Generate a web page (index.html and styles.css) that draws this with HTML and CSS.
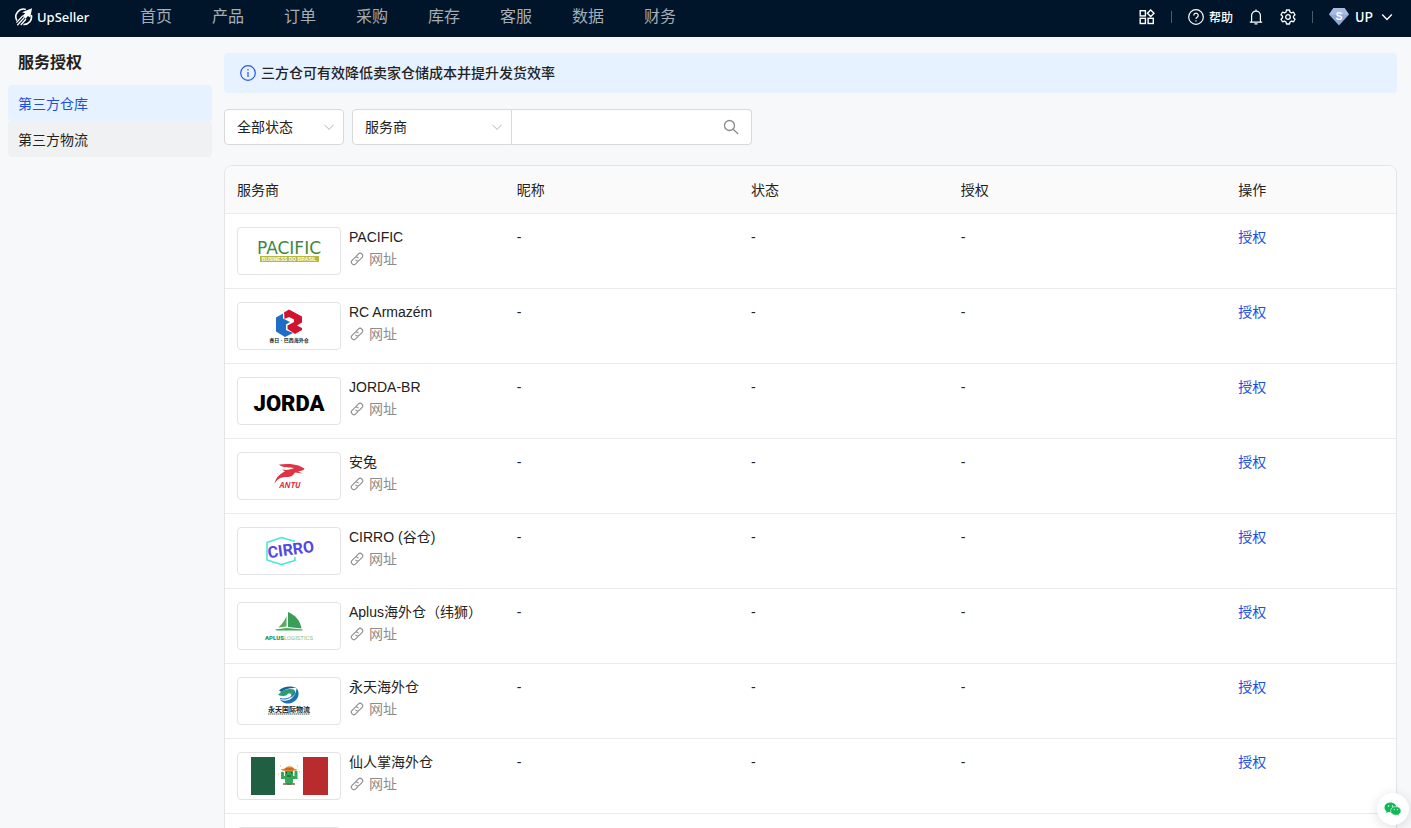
FILE: index.html
```html
<!DOCTYPE html>
<html lang="zh-CN">
<head>
<meta charset="utf-8">
<title>UpSeller - 服务授权</title>
<link rel="stylesheet" href="styles.css">
</head>
<body>
<svg class="sprite" aria-hidden="true">
  <symbol id="link" viewBox="0 0 14 14">
    <g fill="none" stroke="currentColor" stroke-width="1.100" stroke-linecap="round">
      <path d="M6 4.400 8.300 2.100a2.500 2.500 0 0 1 3.600 3.600L9.400 8.200a2.500 2.500 0 0 1-3.600 0"/>
      <path d="M8 9.600 5.700 11.900a2.500 2.500 0 0 1-3.600-3.600L4.600 5.800a2.500 2.500 0 0 1 3.600 0"/>
    </g>
  </symbol>
  <symbol id="chevron" viewBox="0 0 12 12">
    <path d="M1.500 3.800 6 8.400l4.500-4.600" fill="none" stroke="currentColor" stroke-width="1"/>
  </symbol>
</svg>
<div class="app">
  <header class="topbar">
    <a class="brand" href="#">
      <svg class="brand-mark" viewBox="0 0 18 18" fill="none" stroke="#fff" stroke-width="1.600">
        <path d="M1.900 12.500A7.600 7.600 0 0 1 10.800 1.500M16.300 7A7.600 7.600 0 0 1 8.400 16.500"/>
        <path d="M17 .2 15.300 9.600 12.900 8 10.600 10.800 7.700 7.700 10.200 5.300 7 4.300z" fill="#fff" stroke="none"/>
        <path d="M1.400 14.600 7.900 7.600M2.300 17.300 9.400 9.400M5.800 17 11 11" stroke-width="1.300"/>
      </svg>
      <span>UpSeller</span>
    </a>
    <nav class="nav">
      <a href="#">首页</a><a href="#">产品</a><a href="#">订单</a><a href="#">采购</a><a href="#">库存</a><a href="#">客服</a><a href="#">数据</a><a href="#">财务</a>
    </nav>
    <div class="tools">
      <button class="tool" type="button" aria-label="应用">
        <svg viewBox="0 0 16 16" width="16" height="16" fill="none" stroke="#fff" stroke-width="1.400"><rect x="1.200" y="1.700" width="5.200" height="5.200"/><rect x="1.200" y="9.300" width="5.200" height="5.200"/><rect x="9.100" y="9.300" width="5.200" height="5.200"/><path d="m11.700.9 3.300 3.300-3.300 3.300-3.300-3.300z"/></svg>
      </button>
      <span class="divider"></span>
      <button class="tool help" type="button">
        <svg viewBox="0 0 16 16" width="16" height="16" fill="none" stroke="#fff" stroke-width="1.200"><circle cx="8" cy="8" r="7.300"/><path d="M5.800 6.400a2.200 2.200 0 1 1 3.400 1.800C8.300 8.800 8 9 8 9.900"/><path d="M8 11.200v1.200"/></svg>
        帮助
      </button>
      <button class="tool bell" type="button" aria-label="通知">
        <svg viewBox="0 0 14 16" width="14" height="16" fill="none" stroke="#fff" stroke-width="1.200"><path d="M2.600 13V6.500a4.400 4.400 0 0 1 8.800 0V13M.8 13.200h12.400M5.500 14.900h3M7 .5v1.600"/></svg>
      </button>
      <button class="tool gear" type="button" aria-label="设置">
        <svg viewBox="0 0 16 16" width="16" height="16" fill="none" stroke="#fff" stroke-width="1.300" stroke-linejoin="round"><path d="M6.500 1h3l.5 2 1.500.9 2-.7 1.500 2.600-1.500 1.400v1.600l1.500 1.400-1.500 2.600-2-.7-1.500.9-.5 2h-3L6 13l-1.500-.9-2 .7L1 10.200l1.500-1.400V7.200L1 5.800l1.500-2.600 2 .7L6 3z"/><circle cx="8" cy="8" r="2.300"/></svg>
      </button>
      <span class="divider"></span>
      <button class="tool user" type="button">
        <svg viewBox="0 0 20 18" width="20" height="18"><path d="M4.500 0h11L20 6.500 10 17.500 0 6.500z" fill="#93a9d6"/><path d="M4.500 0h11L20 6.500H0z" fill="#a9bbe0"/><text class="gem" x="10" y="12" text-anchor="middle">S</text></svg>
        <span>UP</span>
        <svg class="caret" viewBox="0 0 12 12" width="12" height="12"><path d="m1.200 3.600 4.800 4.800 4.800-4.800" fill="none" stroke="#fff" stroke-width="1.400"/></svg>
      </button>
    </div>
  </header>

  <div class="body">
    <aside class="sidebar">
      <h1>服务授权</h1>
      <a class="side-link active" href="#">第三方仓库</a>
      <a class="side-link" href="#">第三方物流</a>
    </aside>

    <main class="main">
      <div class="notice">
        <svg viewBox="0 0 16 16" width="16" height="16" fill="none" stroke="#2a55e5"><circle cx="8" cy="8" r="7.300" stroke-width="1.200"/><path d="M8 7v5M8 4v1.500" stroke-width="1.200"/></svg>
        <span>三方仓可有效降低卖家仓储成本并提升发货效率</span>
      </div>

      <form class="filters">
        <div class="select status">
          <select aria-label="状态"><option>全部状态</option></select>
          <svg><use href="#chevron"/></svg>
        </div>
        <div class="search">
          <div class="select field">
            <select aria-label="搜索字段"><option>服务商</option></select>
            <svg><use href="#chevron"/></svg>
          </div>
          <div class="keyword">
            <input type="text" aria-label="搜索内容">
            <button type="button" aria-label="搜索"><svg viewBox="0 0 16 16" width="16" height="16" fill="none" stroke="#8a8a8a" stroke-width="1.300"><circle cx="6.500" cy="6.500" r="5"/><path d="m10.200 10.200 5 4.800"/></svg></button>
          </div>
        </div>
      </form>

      <div class="panel">
        <table>
          <colgroup><col class="c-provider"><col class="c-nick"><col class="c-state"><col class="c-auth"><col class="c-action"></colgroup>
          <thead><tr><th>服务商</th><th>昵称</th><th>状态</th><th>授权</th><th>操作</th></tr></thead>
          <tbody>
            <tr><td><div class="provider"><svg class="logo" viewBox="1 1 102 46">
              <text class="pacific" x="52" y="27" text-anchor="middle">PACIFIC</text>
              <rect x="23" y="29" width="59" height="6" fill="#b4b83f"/>
              <text class="pacific-sub" x="52" y="34" text-anchor="middle">BUSINESS DO BRASIL</text>
            </svg><div><div>PACIFIC</div><a class="site" href="#"><svg><use href="#link"/></svg>网址</a></div></div></td><td>-</td><td>-</td><td>-</td><td><a href="#">授权</a></td></tr>

            <tr><td><div class="provider"><svg class="logo" viewBox="1 1 102 46">
              <path d="M39 15.500 46 11.500V16.500L53 20 49 22.500V28L56 31 48 35 39 29.500z" fill="#1c6fc4"/>
              <path d="M47 10.500 52 7.500 65 14.500V20.500L60 23.500 65 26V28L58 32 50.500 27V23.500L57 20V17.500L52 15 47.500 17z" fill="#d2132f"/>
              <text class="rc" x="52" y="40" text-anchor="middle">睿日 · 巴西海外仓</text>
            </svg><div><div>RC Armazém</div><a class="site" href="#"><svg><use href="#link"/></svg>网址</a></div></div></td><td>-</td><td>-</td><td>-</td><td><a href="#">授权</a></td></tr>

            <tr><td><div class="provider"><svg class="logo" viewBox="1 1 102 46">
              <text class="jorda" x="52" y="34" text-anchor="middle">JORDA</text>
            </svg><div><div>JORDA-BR</div><a class="site" href="#"><svg><use href="#link"/></svg>网址</a></div></div></td><td>-</td><td>-</td><td>-</td><td><a href="#">授权</a></td></tr>

            <tr><td><div class="provider"><svg class="logo" viewBox="1 1 102 46">
              <path d="M37.500 31.500C39 25 43.500 21.500 48 19.500L45 17.500C50 18.500 54 17.500 57 16 52 15.500 46 16 42 12.500 50 11.500 57 12 61.500 13.500L67.500 16.500C67 18.500 64 19 61 19.500L66 21.500 58 20.500C56 24 53 25.500 49 25 44 25 40.500 27 37.500 31.500z" fill="#dc3545"/>
              <text class="antu" x="53" y="36" text-anchor="middle">ANTU</text>
            </svg><div><div>安兔</div><a class="site" href="#"><svg><use href="#link"/></svg>网址</a></div></div></td><td>-</td><td>-</td><td>-</td><td><a href="#">授权</a></td></tr>

            <tr><td><div class="provider"><svg class="logo" viewBox="1 1 102 46">
              <path d="M58 14.500 44.500 10.500 30 15.500V33L44.500 37.500 58 33.500V30" fill="none" stroke="#48ead2" stroke-width="1.600" stroke-linejoin="round"/>
              <text class="cirro" x="54" y="28" text-anchor="middle" transform="rotate(-8 54 24)">CIRRO</text>
            </svg><div><div>CIRRO (谷仓)</div><a class="site" href="#"><svg><use href="#link"/></svg>网址</a></div></div></td><td>-</td><td>-</td><td>-</td><td><a href="#">授权</a></td></tr>

            <tr><td><div class="provider"><svg class="logo" viewBox="1 1 102 46">
              <path d="M51 10C58 13 63 18 64.500 26.500L51 25z" fill="#399f58"/>
              <path d="M49.500 14V24.500L41.500 25.500C45 22 48 18 49.500 14z" fill="#55ad58"/>
              <path d="M38 27.500 50 26 65.500 27.500V28.500H39.500z" fill="#46a85a"/>
              <text class="aplus" x="28" y="38">APLUS<tspan class="aplus-sub">LOGISTICS</tspan></text>
            </svg><div><div>Aplus海外仓（纬狮）</div><a class="site" href="#"><svg><use href="#link"/></svg>网址</a></div></div></td><td>-</td><td>-</td><td>-</td><td><a href="#">授权</a></td></tr>

            <tr><td><div class="provider"><svg class="logo" viewBox="1 1 102 46">
              <path d="M42 13.500C46 9.500 54 8 59.500 11 54 10.500 48 11.500 44.500 15z" fill="#185f9e"/>
              <path d="M41 18C45 13 50 11 56.500 12.500 60 14 58 19 54 20.500 55 18 54.500 16 51 16.500 49 20 45 19 41 18z" fill="#2a9d72"/>
              <path d="M59.500 11C65 18 59 27 49.500 26.500 46.500 26 44.500 24.500 43 22.500 49 26 59 22 59.500 11z" fill="#1971b8"/>
              <path d="M43 21.500C50 23.500 56 19.500 57.500 15" stroke="#1971b8" fill="none"/>
              <text class="yongtian" x="52" y="35" text-anchor="middle">永天国际物流</text>
              <path d="M31 37h42" stroke="#555" stroke-width="1.200" stroke-dasharray="1.500 .5"/>
            </svg><div><div>永天海外仓</div><a class="site" href="#"><svg><use href="#link"/></svg>网址</a></div></div></td><td>-</td><td>-</td><td>-</td><td><a href="#">授权</a></td></tr>

            <tr><td><div class="provider"><svg class="logo" viewBox="1 1 102 46">
              <path d="M14 5h24v38H14z" fill="#215f43"/><path d="M66 5h25v38H66z" fill="#b82c2e"/>
              <g fill="none" stroke="#35a857" stroke-linecap="round"><path d="M52 20v9" stroke-width="8"/><path d="M45.500 21v4.500h13.500V20" stroke-width="3"/></g>
              <path d="M43.500 17.500c2 2 15 2 17 0l-4-1c0-3-8-3-8 0z" fill="#e88b25"/>
              <path d="M47.500 17h9" stroke="#bb3b28"/><path d="M49.500 20v1.500M54.500 20v1.500M50 24h4" stroke="#174d2e"/>
              <path d="M46 32h12" stroke="#796454" stroke-width="1.500"/>
              <path d="M41 22h1M62 20h1M60 14h1M43 14h1" stroke="#d7b85c"/>
            </svg><div><div>仙人掌海外仓</div><a class="site" href="#"><svg><use href="#link"/></svg>网址</a></div></div></td><td>-</td><td>-</td><td>-</td><td><a href="#">授权</a></td></tr>

            <tr><td><div class="provider"><svg class="logo" viewBox="1 1 102 46"></svg></div></td><td></td><td></td><td></td><td></td></tr>
          </tbody>
        </table>
      </div>
    </main>
  </div>

  <button class="chat" type="button" aria-label="微信客服">
    <svg viewBox="0 0 18 14" width="18" height="14"><path d="M6.500.5C2.800.5.500 2.700.500 5.500c0 1.600.8 2.900 2 3.700L2 11l2.200-1.100c5 1.500 8.300-1.400 8.300-4.400 0-2.800-2.700-5-6-5z" fill="#12b757"/><path d="M11.800 4.600c-3 0-5.200 1.900-5.200 4.300s2.400 4.300 5.200 4.300l1.600-.3 1.800.9-.4-1.500c1.400-.8 2.200-2 2.200-3.400 0-2.400-2.200-4.300-5.200-4.300z" fill="#12b757" stroke="#fff" stroke-width=".6"/><g fill="#fff"><circle cx="4.600" cy="4" r=".7"/><circle cx="8.400" cy="4" r=".7"/><circle cx="10.200" cy="7.600" r=".6"/><circle cx="13.400" cy="7.600" r=".6"/></g></svg>
  </button>
</div>
</body>
</html>
```

FILE: styles.css
```css
* { box-sizing: border-box; }
body {
  margin: 0;
  font: 14px/22px "Liberation Sans", "Noto Sans CJK SC", sans-serif;
  color: #222;
  background: #f7f8fa;
}
a { color: #1d4fe0; text-decoration: none; }
button, input, select { font: inherit; color: inherit; }
button { border: 0; padding: 0; background: none; cursor: pointer; }
svg { flex: none; }
.sprite { position: absolute; width: 0; height: 0; }
.app { height: 100vh; display: flex; flex-direction: column; overflow: hidden; }

.topbar {
  flex: none;
  display: flex;
  align-items: center;
  height: 37px;
  padding: 0 18px 4px 15px;
  background: #001529;
  color: #fff;
}
.brand {
  display: flex;
  align-items: center;
  gap: 4px;
  width: 125px;
  color: #fff;
  font: 500 13px/20px "Noto Sans", sans-serif;
}
.brand-mark { width: 18px; height: 18px; }
.nav { display: flex; gap: 40px; font-size: 16px; }
.nav a { color: #a6adb4; }
.tools { display: flex; align-items: center; margin-left: auto; }
.tool { display: flex; align-items: center; font: 500 12px/20px "Noto Sans CJK SC", sans-serif; color: #fff; }
.divider { width: 1px; height: 12px; margin: 0 16px; background: #4d5b69; }
.help { gap: 5px; }
.bell { margin-left: 16px; }
.gear { margin: 0 8px 0 17px; }
.gear + .divider { margin-left: 8px; }
.user { gap: 6px; font-size: 13px; }
.caret { margin-left: 2px; }
.gem { font: 700 10px "Liberation Sans", sans-serif; fill: #fff; }

.body { flex: 1; min-height: 0; display: flex; gap: 12px; padding: 0 14px 0 8px; }
.sidebar { flex: none; width: 204px; display: flex; flex-direction: column; padding-top: 14px; }
.sidebar h1 { margin: 0 0 10px; padding-left: 10px; font-size: 16px; line-height: 24px; font-weight: 700; }
.side-link { padding: 8px 10px 6px; border-radius: 4px; background: #f0f1f2; color: #222; }
.side-link.active { background: #e6f2ff; color: #1d4fe0; }

.main { flex: 1; min-width: 0; padding-top: 16px; }
.notice {
  display: flex;
  align-items: center;
  gap: 5px;
  height: 40px;
  padding: 0 16px;
  border-radius: 4px;
  background: #e6f2ff;
  font-weight: 500;
}
.filters { display: flex; gap: 8px; margin: 16px 0 20px; }
.select { position: relative; }
.select select {
  appearance: none;
  width: 100%;
  height: 36px;
  padding: 0 12px;
  border: 1px solid #d9d9d9;
  border-radius: 4px;
  background: #fff;
}
.select svg { position: absolute; right: 9px; top: 12px; width: 12px; height: 12px; color: #b5b5b5; pointer-events: none; }
.status { width: 120px; }
.field { width: 160px; }
.field select { border-radius: 4px 0 0 4px; }
.search { display: flex; width: 400px; }
.keyword {
  flex: 1;
  display: flex;
  align-items: center;
  height: 36px;
  padding-right: 12px;
  border: 1px solid #d9d9d9;
  border-left: 0;
  border-radius: 0 4px 4px 0;
  background: #fff;
}
.keyword input { flex: 1; min-width: 0; border: 0; outline: 0; background: none; padding: 0 12px; }
.keyword button { display: flex; }

.panel { border: 1px solid #e4e5e7; border-radius: 8px; background: #fff; overflow: hidden; }
table { width: 100%; table-layout: fixed; border-collapse: separate; border-spacing: 0; }
th, td { padding: 12px; border-bottom: 1px solid #ebebeb; text-align: left; vertical-align: top; font-weight: 400; }
th { height: 48px; padding-top: 13px; background: #fafafa; }
td { height: 75px; }
.c-provider { width: 23.9%; }
.c-nick { width: 20%; }
.c-state { width: 17.9%; }
.c-auth { width: 23.7%; }
.c-action { width: 14.5%; }
.provider { display: flex; gap: 8px; white-space: nowrap; }
.logo { width: 104px; height: 48px; margin: 1px 0; border: 1px solid #e3e3e3; border-radius: 4px; }
.site { display: flex; align-items: center; gap: 5px; padding-left: 1px; color: #8c8c8c; }
.site svg { width: 14px; height: 14px; }

.logo text { font-family: "Liberation Sans", "Noto Sans CJK SC", sans-serif; }
.logo .pacific { font: 400 17px "DejaVu Sans", sans-serif; fill: #42863f; }
.logo .pacific-sub { font-size: 5px; font-weight: 700; fill: #fff; }
.logo .rc { font-size: 5px; font-weight: 700; fill: #222; }
.logo .jorda { font: 900 22px Roboto, sans-serif; fill: #000; }
.logo .antu { font: italic 700 8px "Open Sans", sans-serif; fill: #dc3545; }
.logo .cirro { font: 700 16px Roboto, sans-serif; fill: #5148e5; }
.logo .aplus { font: 900 6px Roboto, sans-serif; fill: #16945f; }
.logo .aplus-sub { font-weight: 400; fill: #8fc17c; }
.logo .yongtian { font-size: 7px; font-weight: 700; fill: #222; }

.chat {
  position: absolute;
  right: 2px;
  bottom: 3px;
  display: flex;
  align-items: center;
  justify-content: center;
  width: 32px;
  height: 32px;
  border-radius: 50%;
  background: #fff;
  box-shadow: 0 2px 12px #0002;
}
```
